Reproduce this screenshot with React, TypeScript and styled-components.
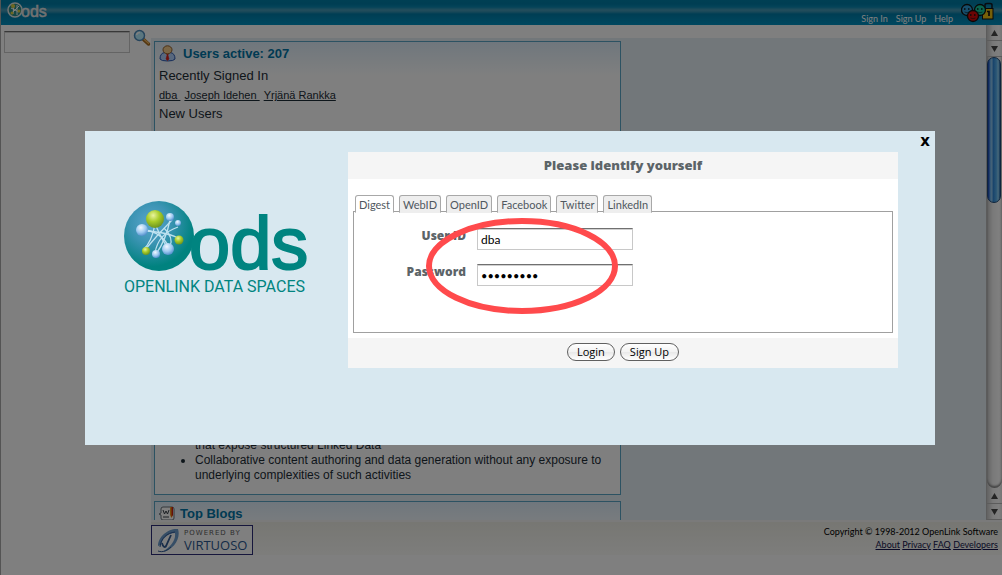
import React, { useState } from "react";
import styled, { createGlobalStyle } from "styled-components";

const arial = `"Liberation Sans", Arial, sans-serif`;
const gill = `Lato, "Gill Sans", sans-serif`;
const heavy = `"Open Sans", "Gill Sans", sans-serif`;

const GlobalStyle = createGlobalStyle`
  *, *::before, *::after { box-sizing: border-box; }
  body { margin: 0; background: #fff; font-family: ${arial}; color: #1c2c36; }
  h1, h2, h3, p, ul { margin: 0; padding: 0; font-weight: normal; }
  button, input { font: inherit; color: inherit; margin: 0; }
`;

/* ---------- page behind the dialog ---------- */

const Page = styled.div`
  display: flex;
  flex-direction: column;
  height: 100vh;
  overflow: hidden;
  border-left: 1px solid #a8a8a8;
`;

const TopBar = styled.header`
  display: flex;
  flex: none;
  justify-content: space-between;
  height: 25px;
  padding: 0 8px 0 6px;
  background: linear-gradient(#007fa8 0, #007ca6 4px, #0a88b2 7px, #4a9cb8 10px, #2f8fb0 12px, #007ca8 14px, #0090c0 100%);
`;

const TopLinks = styled.nav`
  display: flex;
  align-items: flex-end;
  gap: 8px;
  font: 9px/12px ${gill};
`;

const TopLink = styled.a`
  color: #fff;
  text-decoration: none;
`;

const Presence = styled.span`
  display: block;
  width: 33px;
  height: 25px;
`;

const Body = styled.div`
  display: flex;
  flex: 1;
  min-height: 0;
`;

const Sidebar = styled.aside`
  display: flex;
  flex: none;
  align-items: flex-start;
  gap: 3px;
  width: 150px;
  padding: 4px 0 0 3px;
`;

const fieldBorder = `
  border: 1px solid #c8c8c8;
  border-top: 1px solid #707070;
  border-radius: 0;
  box-shadow: inset 0 1px 0 #d0d0d0;
  outline: none;
`;

const SearchInput = styled.input`
  ${fieldBorder}
  width: 126px;
  height: 22px;
  margin-top: 2px;
  padding: 0 4px;
  background: #fff;
  font-size: 12px;
`;

const IconButton = styled.button`
  padding: 0;
  border: 0;
  background: none;
  line-height: 0;
`;

const Pane = styled.main`
  display: flex;
  flex: 1;
  min-width: 0;
  padding-top: 13px;
`;

const PaneInner = styled.div`
  display: flex;
  flex: 1;
  padding: 3px 3px 0;
  background: #e4eff5;
  overflow: hidden;
`;

const Column = styled.div`
  display: flex;
  flex: 0 1 467px;
  flex-direction: column;
`;

const Box = styled.section`
  flex: none;
  padding: 0 4px;
  border: 1px solid #58a4c4;
  background: linear-gradient(#dfeefa, #fff 34px);
`;

const UsersBox = styled(Box)`
  border-bottom: 0;
`;

const WelcomeBox = styled(Box)`
  display: flex;
  flex: 1;
  flex-direction: column;
  justify-content: flex-end;
  min-height: 0;
  margin-bottom: 6px;
  padding-bottom: 11px;
  border-top: 0;
  background: #fff;
  overflow: hidden;
`;

const BlogsBox = styled(Box)`
  height: 19px;
  border-bottom: 0;
  overflow: hidden;
`;

const BoxTitle = styled.h2<{ $gap: number }>`
  display: flex;
  align-items: center;
  gap: ${(p) => p.$gap}px;
  height: 23px;
  font-size: 13px;
  font-weight: bold;
  color: #0074a6;
`;

const SubTitle = styled.h3`
  font-size: 13px;
  line-height: 22px;
`;

const UserLinks = styled.p`
  display: flex;
  gap: 4px;
  font-size: 11px;
  line-height: 16px;

  a { color: inherit; white-space: pre; }
`;

const FeatureList = styled.ul`
  padding-left: 36px;
  font-size: 12px;
  line-height: 15px;
`;

const ScrollBar = styled.div`
  display: flex;
  flex: none;
  flex-direction: column;
  width: 16px;
  border-left: 1px solid #b8b8b8;
  background: linear-gradient(90deg, #c4c4c4, #f4f4f4 40%, #fff 80%, #e8e8e8);
`;

const ScrollButton = styled.button`
  flex: none;
  height: 16px;
  padding: 0;
  border: 0;
  border-bottom: 1px solid #b8b8b8;
  background: none;
  line-height: 0;
`;

const ScrollTrack = styled.div`
  flex: 1;
  border-radius: 0 0 8px 8px;
  box-shadow: inset 0 -2px 2px #888;
`;

const ScrollThumb = styled.div`
  height: 146px;
  margin-right: 1px;
  border: 1px solid #1c4878;
  border-radius: 7px;
  background: linear-gradient(90deg, #1038b0, #68b0ec 20%, #90c8f0 32%, #3088d8 44%, #58b0ec 70%, #90d0f4 85%, #2068a8);
`;

const Footer = styled.footer`
  display: flex;
  flex: none;
  justify-content: space-between;
  height: 35px;
  margin: 0 0 20px 150px;
  padding-right: 4px;
  border-top: 2px solid #f4f4f4;
  background: linear-gradient(#eeeee6, #fbfbf8);
`;

const Badge = styled.a`
  display: flex;
  align-items: center;
  gap: 4px;
  width: 102px;
  height: 30px;
  margin-top: 3px;
  padding-left: 5px;
  border: 1px solid #2c2c78;
  background: #fff;
  color: #2c5890;
  text-decoration: none;
`;

const BadgeText = styled.span`
  display: flex;
  flex-direction: column;
  gap: 1px;
  font: 13px/14px "Open Sans", sans-serif;

  small {
    font: 7px/8px "DejaVu Sans", sans-serif;
    letter-spacing: 1px;
    color: #606060;
  }
`;

const Legal = styled.div`
  padding-top: 3px;
  font: 9px/13px ${gill};
  text-align: right;
  color: #000;

  a { color: #14144c; }
`;

/* ---------- login dialog ---------- */

const Overlay = styled.div`
  position: fixed;
  inset: 0;
  padding: 131px 67px 0 85px;
  background: rgba(0, 0, 0, 0.5);
`;

const Dialog = styled.div`
  display: flex;
  position: relative;
  max-width: 850px;
  min-height: 314px;
  padding: 21px 37px 77px 39px;
  background: #d8e8f0;
  font-family: ${gill};
`;

const CloseButton = styled.button`
  position: absolute;
  top: 3px;
  right: 4px;
  width: 12px;
  padding: 0;
  border: 0;
  background: none;
  font: bold 15px/14px "DejaVu Sans", sans-serif;
  color: #000;
`;

const Logo = styled.div`
  flex: 0 0 224px;
  padding-top: 48px;
  line-height: 0;
`;

const LoginForm = styled.form`
  display: flex;
  flex: 1;
  flex-direction: column;
  background: #fff;
`;

const FormTitle = styled.h1`
  background: #f5f5f5;
  font-family: ${heavy};
  font-size: 13px;
  font-weight: 800;
  line-height: 27px;
  text-align: center;
  color: #5c6468;
`;

const TabList = styled.div`
  display: flex;
  gap: 5px;
  margin: 16px 0 -2px 7px;
  z-index: 1;
`;

const Tab = styled.button<{ $active: boolean }>`
  height: 18px;
  padding: 1px 3px 0;
  border: 1px solid #a8a8a8;
  border-bottom-color: ${(p) => (p.$active ? "#fff" : "#eee")};
  border-radius: 3px 3px 0 0;
  background: ${(p) => (p.$active ? "#fff" : "#eee")};
  font-size: 11px;
  line-height: 15px;
  color: #505860;
`;

const TabPanel = styled.div`
  position: relative;
  flex: 1;
  margin: 0 5px 5px;
  padding-top: 16px;
  border: 1px solid #a0a0a0;
`;

const Field = styled.div`
  display: flex;
  gap: 11px;
  margin-bottom: 14px;
`;

const FieldLabel = styled.label`
  width: 112px;
  font-family: ${heavy};
  font-size: 12px;
  font-weight: 800;
  line-height: 16px;
  text-align: right;
  color: #5c6468;
`;

const FieldInput = styled.input`
  ${fieldBorder}
  width: 156px;
  height: 22px;
  padding: 0 3px;
  background: #fff;
  font-size: 12px;
  color: #000;

  &[type="password"] { font-size: 11px; }
`;

const Highlight = styled.svg`
  position: absolute;
  left: 71px;
  top: 5px;
  pointer-events: none;
`;

const Actions = styled.div`
  display: flex;
  justify-content: center;
  gap: 5px;
  height: 30px;
  padding-top: 5px;
  background: #f5f5f5;
`;

const PushButton = styled.button`
  height: 18px;
  padding: 0 9px 1px;
  border: 1px solid #606060;
  border-radius: 9px;
  background: linear-gradient(#fff, #f2f2f2 50%, #e8e8e8 50%, #fff);
  font: 11px/15px "Open Sans", sans-serif;
  color: #000;
`;

/* ---------- drawings ---------- */

const Globe = () => (
  <g>
    <circle cx="35" cy="36" r="35" fill="url(#globe)" />
    <g fill="none" stroke="#d4effa" strokeWidth="1.3" opacity=".85">
      <path d="M20 31 Q46 32 57 40" />
      <path d="M31 24 Q28 42 19 50" />
      <path d="M21 30 Q38 32 46 49" />
      <path d="M32 26 Q38 40 45 50" />
      <path d="M48 20 Q34 34 20 51" />
      <path d="M46 20 Q42 40 32 54" />
      <path d="M54 27 Q34 34 31 53" />
      <path d="M40 28 Q50 38 46 46" />
    </g>
    <circle cx="31" cy="19" r="9" fill="url(#lime)" />
    <circle cx="46" cy="17" r="4" fill="url(#sky)" />
    <circle cx="54" cy="23" r="3" fill="url(#sky)" />
    <circle cx="18" cy="30" r="6" fill="url(#sky)" />
    <circle cx="55" cy="40" r="4.500" fill="url(#lime)" />
    <circle cx="22" cy="51" r="4" fill="url(#lime)" />
    <circle cx="44" cy="49" r="6" fill="url(#sky)" />
    <circle cx="32" cy="54" r="4" fill="url(#sky)" />
  </g>
);

const OdsLogo = () => (
  <svg width="190" height="98" viewBox="0 0 190 98" role="img" aria-label="OpenLink Data Spaces">
    <defs>
      <radialGradient id="globe" cx=".38" cy=".32" r=".62">
        <stop offset="0" stopColor="#5aa6cc" />
        <stop offset=".45" stopColor="#3c94b4" />
        <stop offset="1" stopColor="#00827f" />
      </radialGradient>
      <radialGradient id="lime" cx=".4" cy=".3" r=".7">
        <stop offset="0" stopColor="#eaf4a0" />
        <stop offset=".5" stopColor="#a8cc28" />
        <stop offset="1" stopColor="#6c9420" />
      </radialGradient>
      <radialGradient id="sky" cx=".4" cy=".3" r=".7">
        <stop offset="0" stopColor="#f0f8ff" />
        <stop offset=".6" stopColor="#9cc8f0" />
        <stop offset="1" stopColor="#5490cc" />
      </radialGradient>
    </defs>
    <Globe />
    <text x="65" y="69" fontFamily="'Liberation Sans', sans-serif" fontSize="74" fill="#008480" stroke="#008480" strokeWidth="2">ods</text>
    <text x="0" y="92" fontFamily="Roboto, sans-serif" fontSize="16" fill="#008480">OPENLINK DATA SPACES</text>
  </svg>
);

const SmallLogo = () => (
  <svg width="42" height="22" viewBox="0 0 42 22" role="img" aria-label="ods">
    <circle cx="8" cy="10" r="7" fill="#2c8c88" stroke="#e0e8e8" strokeWidth="1.500" />
    <path d="M4 8 L12 12 M7 5 L6 14 M12 6 L5 13 M10 5 L10 15" stroke="#fff" strokeWidth="1" />
    <circle cx="6" cy="6" r="2" fill="#dcd040" />
    <circle cx="12" cy="11" r="1.500" fill="#dcd040" />
    <circle cx="5" cy="13" r="1.500" fill="#dcd040" />
    <text x="14" y="17" fontFamily="'Liberation Sans', sans-serif" fontSize="16" fill="#e4e4e4" stroke="#e4e4e4" strokeWidth=".5">ods</text>
  </svg>
);

const SearchIcon = () => (
  <svg width="18" height="18" viewBox="0 0 18 18">
    <path d="M10.500 10.500 L15.500 15" stroke="#a86c20" strokeWidth="3.500" strokeLinecap="round" />
    <path d="M11 10.300 L15.500 14.300" stroke="#f0b860" strokeWidth="1.300" strokeLinecap="round" />
    <circle cx="6.500" cy="6.500" r="5" fill="#b4ecff" stroke="#4c88b8" strokeWidth="1.500" />
    <path d="M3.500 6 A3.500 3.500 0 0 1 7 3.500" fill="none" stroke="#fff" strokeWidth="1.500" />
  </svg>
);

const PersonIcon = () => (
  <svg width="17" height="17" viewBox="0 0 17 17">
    <path d="M1 14 Q1 8 6 7.500 H11 Q16 8 16 14 Q15 16 8.500 16 Q2 16 1 14Z" fill="#b0d0fc" stroke="#2c58b0" />
    <path d="M6 8 L8.500 11 L11 8Z" fill="#fff" />
    <path d="M7.500 8.500 H9.500 L9 10.500 L10 14 L8.500 15.500 L7 14 L8 10.500Z" fill="#d82018" stroke="#d82018" strokeWidth=".6" />
    <ellipse cx="8.500" cy="4.800" rx="4.500" ry="4" fill="#f4cc8c" stroke="#94602c" />
  </svg>
);

const BlogIcon = () => (
  <svg width="16" height="16" viewBox="0 0 16 16">
    <path d="M4 1 H13 Q15 1 15 3 V12 Q15 14 13 14 H4 Q2 14 2 12 V9 L0 8 L2 7 V3 Q2 1 4 1Z" fill="#fff" stroke="#687078" />
    <path d="M4 4 L5.500 8 L7 5 L8.500 8 L10 4 M4 11 H10" fill="none" stroke="#384048" />
    <path d="M11 1 H14 V9 L12.500 12 L11 9Z" fill="#f09818" />
    <path d="M12.500 1 H14 V9 L12.500 11Z" fill="#cc2010" />
  </svg>
);

const Face = ({ x, y, fill }: { x: number; y: number; fill: string }) => (
  <g stroke="#101010">
    <circle cx={x} cy={y} r="5.500" fill={fill} strokeWidth="1.300" />
    <path d={`M${x - 3} ${y - 1} h1.500 M${x + 1} ${y - 1} h1.500`} strokeWidth="1.500" />
    <path d={`M${x - 2.5} ${y + 2} q2.500 1.500 5 0`} fill="none" strokeWidth=".6" />
  </g>
);

const FriendsIcon = () => (
  <svg width="33" height="25" viewBox="0 0 33 25">
    <path d="M24 9 V5 Q24 3.500 26 3.500 H29 Q31 3.500 31 5 V9" fill="none" stroke="#101820" strokeWidth="1.500" />
    <rect x="21.500" y="8.500" width="10.500" height="10.500" fill="#ecc010" stroke="#101010" />
    <path d="M26 11.500 H28 V16" fill="none" stroke="#101010" strokeWidth="1.700" />
    <Face x={6} y={10} fill="#2c9cd8" />
    <Face x={19} y={10} fill="#10c89c" />
    <Face x={12} y={16} fill="#d80808" />
  </svg>
);

const VirtuosoMark = () => (
  <svg width="23" height="25" viewBox="0 0 23 25">
    <path d="M1 18 C1 8 12 0 21 1 C24 10 17 22 5 24 C14 19 19 12 18 5 C11 5 5 11 4 17Z" fill="#6c9ccc" />
    <path d="M3 19 C4 10 10 5 18 4" fill="none" stroke="#345c9c" strokeWidth="1" />
    <path d="M5 15 C6 19 8 20 9 18 L14 7" fill="none" stroke="#345c94" strokeWidth="1.800" />
    <path d="M1 23 C6 25 11 22 14 19" fill="none" stroke="#345c94" strokeWidth="1" />
  </svg>
);

const Arrow = ({ down }: { down?: boolean }) => (
  <svg width="9" height="8" viewBox="0 0 9 8">
    <path d={down ? "M1 1 H8 L4.500 7Z" : "M1 7 H8 L4.500 1Z"} fill="#484848" />
  </svg>
);

const tabs = ["Digest", "WebID", "OpenID", "Facebook", "Twitter", "LinkedIn"];

export default function App() {
  const [active, setActive] = useState("Digest");

  return (
    <>
      <GlobalStyle />
      <Page>
        <TopBar>
          <SmallLogo />
          <TopLinks>
            <TopLink href="#signin">Sign In</TopLink>
            <TopLink href="#signup">Sign Up</TopLink>
            <TopLink href="#help">Help</TopLink>
            <Presence><FriendsIcon /></Presence>
          </TopLinks>
        </TopBar>
        <Body>
          <Sidebar>
            <SearchInput aria-label="Search" />
            <IconButton aria-label="Search"><SearchIcon /></IconButton>
          </Sidebar>
          <Pane>
            <PaneInner>
              <Column>
                <UsersBox>
                  <BoxTitle $gap={7}><PersonIcon />Users active: 207</BoxTitle>
                  <SubTitle>Recently Signed In</SubTitle>
                  <UserLinks>
                    <a href="#dba">{"dba "}</a>
                    <a href="#joseph">{"Joseph Idehen "}</a>
                    <a href="#yrjana">Yrjänä Rankka</a>
                  </UserLinks>
                  <SubTitle>New Users</SubTitle>
                </UsersBox>
                <WelcomeBox>
                  <FeatureList>
                    <li>
                      <br />
                      that expose structured Linked Data
                    </li>
                    <li>
                      Collaborative content authoring and data generation without any exposure to
                      underlying complexities of such activities
                    </li>
                  </FeatureList>
                </WelcomeBox>
                <BlogsBox>
                  <BoxTitle $gap={5}><BlogIcon />Top Blogs</BoxTitle>
                </BlogsBox>
              </Column>
            </PaneInner>
          </Pane>
          <ScrollBar>
            <ScrollButton aria-label="Scroll up"><Arrow /></ScrollButton>
            <ScrollButton aria-label="Scroll down"><Arrow down /></ScrollButton>
            <ScrollTrack><ScrollThumb /></ScrollTrack>
            <ScrollButton aria-label="Scroll up"><Arrow /></ScrollButton>
            <ScrollButton aria-label="Scroll down"><Arrow down /></ScrollButton>
          </ScrollBar>
        </Body>
        <Footer>
          <Badge href="#virtuoso">
            <VirtuosoMark />
            <BadgeText><small>POWERED BY</small>VIRTUOSO</BadgeText>
          </Badge>
          <Legal>
            <p>Copyright © 1998-2012 OpenLink Software</p>
            <p>
              <a href="#about">About</a> <a href="#privacy">Privacy</a> <a href="#faq">FAQ</a>{" "}
              <a href="#developers">Developers</a>
            </p>
          </Legal>
        </Footer>
      </Page>

      <Overlay>
        <Dialog role="dialog" aria-labelledby="login-title">
          <CloseButton aria-label="Close">x</CloseButton>
          <Logo><OdsLogo /></Logo>
          <LoginForm onSubmit={(e) => e.preventDefault()}>
            <FormTitle id="login-title">Please identify yourself</FormTitle>
            <TabList role="tablist">
              {tabs.map((t) => (
                <Tab key={t} type="button" role="tab" aria-selected={t === active} $active={t === active} onClick={() => setActive(t)}>
                  {t}
                </Tab>
              ))}
            </TabList>
            <TabPanel role="tabpanel">
              <Field>
                <FieldLabel htmlFor="user">User ID</FieldLabel>
                <FieldInput id="user" defaultValue="dba" />
              </Field>
              <Field>
                <FieldLabel htmlFor="password">Password</FieldLabel>
                <FieldInput id="password" type="password" defaultValue="demodemo1" />
              </Field>
              <Highlight width="194" height="98" viewBox="0 0 194 98">
                <ellipse cx="97" cy="49" rx="93" ry="45" fill="none" stroke="#ff4a4c" strokeWidth="6" />
              </Highlight>
            </TabPanel>
            <Actions>
              <PushButton type="submit">Login</PushButton>
              <PushButton type="button">Sign Up</PushButton>
            </Actions>
          </LoginForm>
        </Dialog>
      </Overlay>
    </>
  );
}
